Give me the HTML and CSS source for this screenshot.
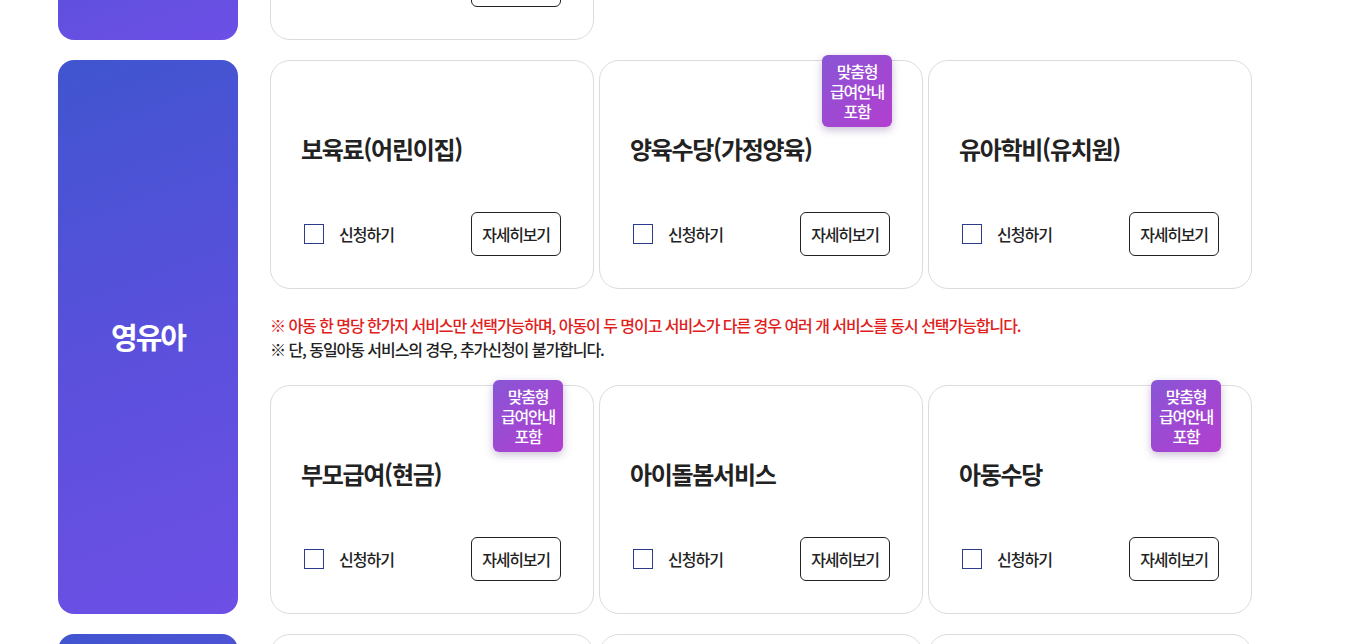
FILE: index.html
```html
<!DOCTYPE html>
<html lang="ko">
<head>
<meta charset="utf-8">
<title>서비스 선택</title>
<link rel="stylesheet" href="styles.css">
</head>
<body>
<div class="page">
  <section class="group group-first">
    <div class="side"><span class="side-label">영아</span></div>
    <div class="content">
      <div class="cards">
        <div class="card">
          <h3 class="card-title">첫만남이용권</h3>
          <div class="card-foot">
            <label class="check"><span class="box"></span><span class="check-text">신청하기</span></label>
            <button class="more">자세히보기</button>
          </div>
        </div>
      </div>
    </div>
  </section>

  <section class="group">
    <div class="side"><span class="side-label">영유아</span></div>
    <div class="content">
      <div class="cards">
        <div class="card">
          <h3 class="card-title">보육료(어린이집)</h3>
          <div class="card-foot">
            <label class="check"><span class="box"></span><span class="check-text">신청하기</span></label>
            <button class="more">자세히보기</button>
          </div>
        </div>
        <div class="card">
          <span class="badge">맞춤형<br>급여안내<br>포함</span>
          <h3 class="card-title">양육수당(가정양육)</h3>
          <div class="card-foot">
            <label class="check"><span class="box"></span><span class="check-text">신청하기</span></label>
            <button class="more">자세히보기</button>
          </div>
        </div>
        <div class="card">
          <h3 class="card-title">유아학비(유치원)</h3>
          <div class="card-foot">
            <label class="check"><span class="box"></span><span class="check-text">신청하기</span></label>
            <button class="more">자세히보기</button>
          </div>
        </div>
      </div>
      <div class="notes">
        <p class="note note-red">※ 아동 한 명당 한가지 서비스만 선택가능하며, 아동이 두 명이고 서비스가 다른 경우 여러 개 서비스를 동시 선택가능합니다.</p>
        <p class="note">※ 단, 동일아동 서비스의 경우, 추가신청이 불가합니다.</p>
      </div>
      <div class="cards">
        <div class="card">
          <span class="badge">맞춤형<br>급여안내<br>포함</span>
          <h3 class="card-title">부모급여(현금)</h3>
          <div class="card-foot">
            <label class="check"><span class="box"></span><span class="check-text">신청하기</span></label>
            <button class="more">자세히보기</button>
          </div>
        </div>
        <div class="card">
          <h3 class="card-title">아이돌봄서비스</h3>
          <div class="card-foot">
            <label class="check"><span class="box"></span><span class="check-text">신청하기</span></label>
            <button class="more">자세히보기</button>
          </div>
        </div>
        <div class="card">
          <span class="badge">맞춤형<br>급여안내<br>포함</span>
          <h3 class="card-title">아동수당</h3>
          <div class="card-foot">
            <label class="check"><span class="box"></span><span class="check-text">신청하기</span></label>
            <button class="more">자세히보기</button>
          </div>
        </div>
      </div>
    </div>
  </section>

  <section class="group">
    <div class="side"><span class="side-label">아동</span></div>
    <div class="content">
      <div class="cards">
        <div class="card">
          <h3 class="card-title">초등돌봄</h3>
          <div class="card-foot">
            <label class="check"><span class="box"></span><span class="check-text">신청하기</span></label>
            <button class="more">자세히보기</button>
          </div>
        </div>
        <div class="card">
          <h3 class="card-title">방과후학교</h3>
          <div class="card-foot">
            <label class="check"><span class="box"></span><span class="check-text">신청하기</span></label>
            <button class="more">자세히보기</button>
          </div>
        </div>
        <div class="card">
          <h3 class="card-title">지역아동센터</h3>
          <div class="card-foot">
            <label class="check"><span class="box"></span><span class="check-text">신청하기</span></label>
            <button class="more">자세히보기</button>
          </div>
        </div>
      </div>
    </div>
  </section>
</div>
</body>
</html>
```

FILE: styles.css
```css
* { box-sizing: border-box; }
html, body { margin: 0; padding: 0; background: #fff; overflow: hidden; }
body {
  font-family: "Noto Sans CJK KR", "Noto Sans", sans-serif;
  color: #222;
}
.page {
  padding-left: 58px;
  display: flex;
  flex-direction: column;
  gap: 20px;
  margin-top: -189px;
}
.group {
  display: flex;
  gap: 32px;
  align-items: stretch;
}
.side {
  width: 180px;
  flex: 0 0 180px;
  border-radius: 16px;
  background: linear-gradient(160deg, #4055cf 0%, #5a50dc 50%, #6d4fe5 100%);
  display: flex;
  align-items: center;
  justify-content: center;
}
.side-label {
  color: #fff;
  font-size: 29px;
  font-weight: 700;
  letter-spacing: -2px;
  margin-top: -3px;
}
.content {
  display: flex;
  flex-direction: column;
}
.cards {
  display: grid;
  grid-template-columns: repeat(3, 324px);
  gap: 5px;
}
.card {
  position: relative;
  height: 229px;
  border: 1px solid #dcdcdc;
  border-radius: 20px;
  padding: 70px 32px 32px 32px;
  display: flex;
  flex-direction: column;
  justify-content: space-between;
  background: #fff;
}
.card-title {
  margin: 0 0 0 -2px;
  font-size: 24px;
  line-height: 36px;
  font-weight: 700;
  letter-spacing: -1.3px;
  color: #222;
}
.card-foot {
  display: flex;
  align-items: center;
  justify-content: space-between;
  height: 44px;
}
.check {
  display: flex;
  align-items: center;
  gap: 15px;
  padding-left: 1px;
}
.box {
  width: 20px;
  height: 20px;
  border: 1px solid #2c3b8c;
  background: #fff;
}
.check-text {
  font-size: 16px;
  font-weight: 500;
  letter-spacing: -1px;
  color: #222;
}
.more {
  width: 90px;
  height: 44px;
  border: 1px solid #222;
  border-radius: 6px;
  background: #fff;
  font-family: inherit;
  font-size: 16px;
  font-weight: 500;
  letter-spacing: -1.2px;
  color: #222;
  padding: 0;
}
.badge {
  position: absolute;
  top: -6px;
  right: 30px;
  width: 70px;
  height: 72px;
  border-radius: 6px;
  background: linear-gradient(135deg, #8956d6 0%, #a048d2 55%, #b33fcf 100%);
  box-shadow: 0 3px 8px rgba(80, 40, 120, 0.3);
  color: #fff;
  font-size: 16px;
  line-height: 20px;
  font-weight: 500;
  letter-spacing: -1.2px;
  text-align: center;
  display: flex;
  align-items: center;
  justify-content: center;
}
.notes {
  padding: 24px 0;
}
.note {
  margin: 0;
  font-size: 16px;
  line-height: 24px;
  font-weight: 500;
  letter-spacing: -1.05px;
  color: #222;
}
.note-red {
  color: #e0201c;
}
```
